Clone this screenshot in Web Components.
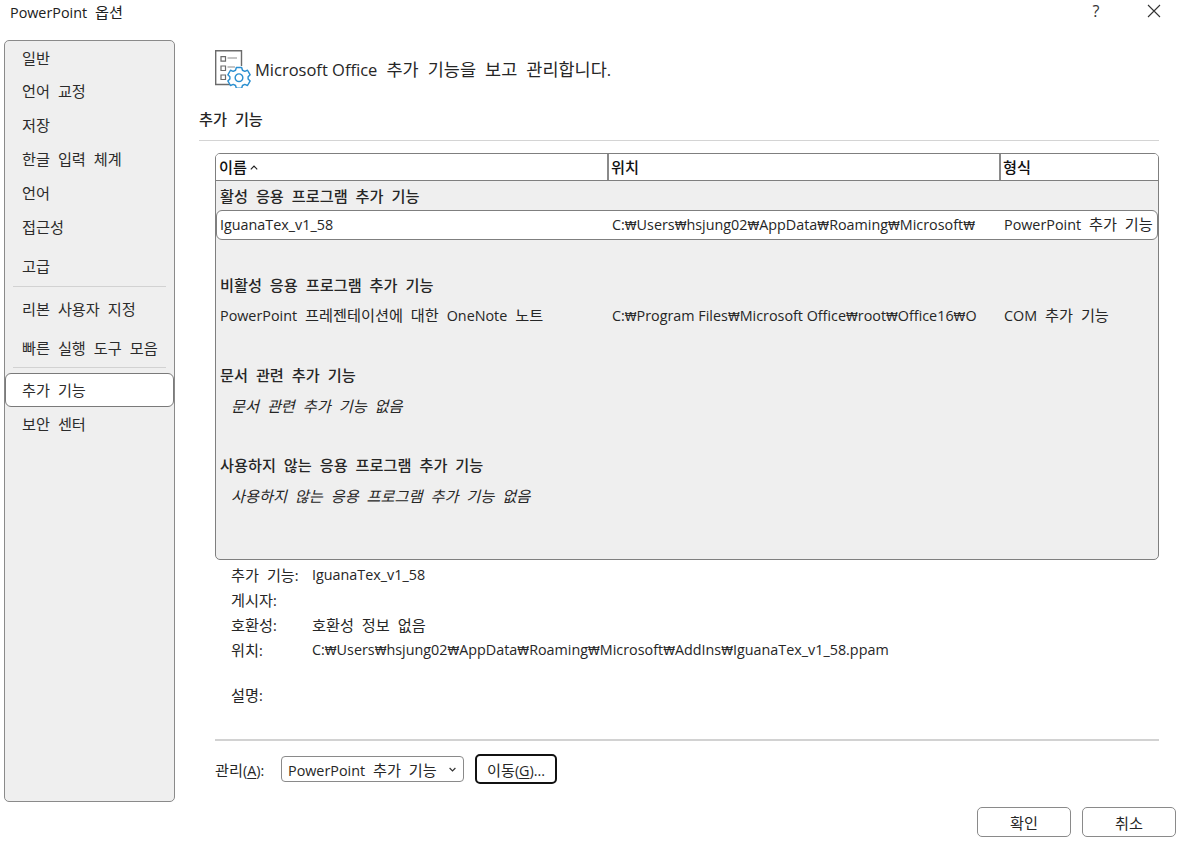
<!DOCTYPE html>
<html lang="ko"><head><meta charset="utf-8"><title>PowerPoint 옵션</title>
<style>
html,body{margin:0;padding:0;background:#fff}
body{width:1180px;height:846px;overflow:hidden;font:14.35px "Open Sans","Noto Sans CJK KR",sans-serif;color:#262626}
</style></head><body>
<ppt-dialog>
  <ppt-titlebar slot="title">PowerPoint 옵션</ppt-titlebar>
  <ppt-sidebar slot="side">
    <ppt-nav h="33">일반</ppt-nav>
    <ppt-nav h="34">언어 교정</ppt-nav>
    <ppt-nav h="34">저장</ppt-nav>
    <ppt-nav h="34">한글 입력 체계</ppt-nav>
    <ppt-nav h="34">언어</ppt-nav>
    <ppt-nav h="34">접근성</ppt-nav>
    <ppt-nav h="42" lift="0">고급</ppt-nav>
    <ppt-sep></ppt-sep>
    <ppt-nav h="44">리본 사용자 지정</ppt-nav>
    <ppt-nav h="36" lift="4">빠른 실행 도구 모음</ppt-nav>
    <ppt-sep></ppt-sep>
    <ppt-nav h="34" selected>추가 기능</ppt-nav>
    <ppt-nav h="34">보안 센터</ppt-nav>
  </ppt-sidebar>
  <ppt-main slot="main">
    <ppt-heading>Microsoft Office 추가 기능을 보고 관리합니다.</ppt-heading>
    <ppt-section>추가 기능</ppt-section>
    <ppt-table>
      <ppt-row kind="group" a="활성 응용 프로그램 추가 기능"></ppt-row>
      <ppt-row kind="sel" a="IguanaTex_v1_58" b="C:₩Users₩hsjung02₩AppData₩Roaming₩Microsoft₩" c="PowerPoint 추가 기능"></ppt-row>
      <ppt-row></ppt-row>
      <ppt-row kind="group" a="비활성 응용 프로그램 추가 기능"></ppt-row>
      <ppt-row a="PowerPoint 프레젠테이션에 대한 OneNote 노트" b="C:₩Program Files₩Microsoft Office₩root₩Office16₩O" c="COM 추가 기능"></ppt-row>
      <ppt-row></ppt-row>
      <ppt-row kind="group" a="문서 관련 추가 기능"></ppt-row>
      <ppt-row kind="empty" a="문서 관련 추가 기능 없음"></ppt-row>
      <ppt-row></ppt-row>
      <ppt-row kind="group" a="사용하지 않는 응용 프로그램 추가 기능"></ppt-row>
      <ppt-row kind="empty" a="사용하지 않는 응용 프로그램 추가 기능 없음"></ppt-row>
    </ppt-table>
    <ppt-details>
      <ppt-detail label="추가 기능:" h="25">IguanaTex_v1_58</ppt-detail>
      <ppt-detail label="게시자:" h="25"></ppt-detail>
      <ppt-detail label="호환성:" h="25">호환성 정보 없음</ppt-detail>
      <ppt-detail label="위치:" h="45">C:₩Users₩hsjung02₩AppData₩Roaming₩Microsoft₩AddIns₩IguanaTex_v1_58.ppam</ppt-detail>
      <ppt-detail label="설명:" h="25"></ppt-detail>
    </ppt-details>
    <ppt-manage></ppt-manage>
  </ppt-main>
  <ppt-button slot="ok">확인</ppt-button>
  <ppt-button slot="cancel">취소</ppt-button>
</ppt-dialog>
<script>
function def(name,html){
  customElements.define(name,class extends HTMLElement{
    connectedCallback(){
      if(this.shadowRoot)return;
      const r=this.attachShadow({mode:'open'});
      r.innerHTML=typeof html==='function'?html(this):html;
      fit(r);
    }
  });
}
/* Hangul runs are set slightly larger than Latin, with wider spaces; the won sign gets its own advance */
const RUN=/(\s*[\uAC00-\uD7A3]+(?:\s+[\uAC00-\uD7A3]+)*\s*|₩)/;
function fit(root){
  for(const n of [...root.childNodes]){
    if(n.nodeType===1){
      if(n.localName!=='style'&&n.localName!=='svg')fit(n);
    }else if(n.nodeType===3&&RUN.test(n.data)&&n.data.trim()){
      const f=document.createDocumentFragment();
      n.data.split(RUN).forEach((p,i)=>{
        if(!p)return;
        if(i%2){
          const s=document.createElement('span');
          s.textContent=p;
          s.style.cssText=p==='₩'?'font-family:"DejaVu Sans",sans-serif;font-size:.83em':'font-family:"Noto Sans CJK KR",sans-serif;font-size:1.06em;word-spacing:.24em';
          f.append(s);
        }else f.append(p);
      });
      n.replaceWith(f);
    }
  }
}
def('ppt-dialog',`<style>
:host{display:grid;width:1180px;height:846px;grid-template-columns:171px 1fr;grid-template-rows:40px 762px 1fr;column-gap:40px;padding-left:4px;box-sizing:border-box}
.t{grid-column:1/3;margin-left:-4px}
.f{grid-column:1/3;display:flex;justify-content:flex-end;gap:11px;padding:5px 4px 0 0}
</style>
<div class="t"><slot name="title"></slot></div>
<slot name="side"></slot><slot name="main"></slot>
<div class="f"><slot name="ok"></slot><slot name="cancel"></slot></div>`);
def('ppt-titlebar',`<style>
:host{display:flex;align-items:flex-start;height:40px;color:#202020}
.t{flex:1;padding:1px 0 0 10px;line-height:20px}
.q{width:16px;text-align:center;font-size:16px;line-height:22px;margin-right:43px;color:#333}
svg{display:block;margin:4px 19px 0 0}
</style><div class="t"><slot></slot></div><div class="q">?</div>
<svg width="14" height="14" viewBox="0 0 14 14" fill="none" stroke="#333" stroke-width="1.1"><path d="M1 1L13 13M13 1L1 13"/></svg>`);
def('ppt-sidebar',`<style>
:host{display:block;box-sizing:border-box;width:171px;height:762px;background:#efefef;border:1px solid #8a8a8a;border-radius:5px}
</style><slot></slot>`);
def('ppt-nav',h=>`<style>
:host{display:flex;align-items:center;box-sizing:border-box;height:${h.getAttribute('h')}px;padding:0 0 ${h.getAttribute('lift')||2}px 17px;white-space:nowrap;color:#2b2b2b}
:host([selected]){background:#fff;border:1px solid #7a7a7a;border-radius:6px;margin-top:5px;padding-left:16px;width:169px}
</style><slot></slot>`);
def('ppt-sep',`<style>:host{display:block;height:1px;background:#d2d2d2;margin:0 8px}</style>`);
def('ppt-main',`<style>:host{display:block;width:944px}</style><slot></slot>`);
def('ppt-heading',`<style>
:host{display:flex;align-items:center;box-sizing:border-box;height:60px;font-size:16.5px;color:#262626;padding-bottom:3px}
svg{display:block;margin:0 4px 0 0;flex:none;align-self:flex-start;margin-top:10px}
</style><svg width="36" height="38" viewBox="0 0 36 38" fill="none">
<path d="M16 34.500H.7V.7H26.500V16" stroke="#6b6b6b" stroke-width="1.4"/>
<path d="M6 6.700h4.500v4.500H6zM6 16h4.500v4.500H6zM6 25h4.500v4.500H6z" stroke="#6b6b6b" stroke-width="1.2"/>
<path d="M12.500 8h9.500M12.500 17h7.500" stroke="#8a8a8a" stroke-width="1.2"/>
<g transform="translate(24 27.700) scale(1.2)" stroke="#2b8fd0" stroke-width="1.2"><path d="M-2.200-8.500h4.400l.7 2.300 1.900.9 2.300-.9 2.200 3.800-1.700 1.700v1.700l1.700 1.700-2.200 3.800-2.300-.9-1.900.9-.7 2.300h-4.400l-.7-2.300-1.900-.9-2.300.9-2.200-3.800 1.700-1.700v-1.700l-1.700-1.700 2.200-3.800 2.300.9 1.900-.9z" fill="#fff" stroke-linejoin="round"/><circle r="3.200"/></g></svg>
<span><slot></slot></span>`);
def('ppt-section',`<style>
:host{display:flex;align-items:center;box-sizing:border-box;height:41px;margin-left:-16px;width:960px;font-weight:500;border-bottom:1px solid #d4d4d4;padding-bottom:5px}
</style><slot></slot>`);
def('ppt-table',`<style>
:host{display:block;box-sizing:border-box;width:944px;height:407px;margin-top:12px;background:#efefef;border:1px solid #7f7f7f;border-radius:5px;overflow:hidden}
.h{display:grid;grid-template-columns:393px 392px 1fr;height:26px;background:#fff;border-bottom:1px solid #7f7f7f;font-weight:500;color:#111}
.h div{padding-left:2px;line-height:25px;border-right:2px solid #8a8a8a;box-sizing:border-box}
.h div:first-child{padding-left:3px}
.h div:last-child{border:0}
svg{margin-left:3px;vertical-align:3px}
</style><div class="h"><div>이름<svg width="8" height="5" viewBox="0 0 8 5" fill="none" stroke="#222" stroke-width="1.2"><path d="M.8 4.300L4 1l3.200 3.300"/></svg></div><div>위치</div><div>형식</div></div><slot></slot>`);
def('ppt-row',e=>{
  const k=e.getAttribute('kind')||'';
  const a=e.getAttribute('a')||'',b=e.getAttribute('b')||'',c=e.getAttribute('c')||'';
  return `<style>
:host{display:block;height:30px}
.r{display:grid;grid-template-columns:392px 392px 1fr;align-items:baseline;align-content:center;height:30px;box-sizing:border-box;white-space:nowrap;overflow:hidden;padding-top:1px}
.r>div{padding-left:4px;overflow:hidden;line-height:22px}
.group{font-weight:500;padding:0 0 1px}.group>div{overflow:visible}
.empty{font-style:italic;padding:2px 0 0 11px}.empty>div{overflow:visible}
.sel{background:#fff;border:1px solid #7f7f7f;border-radius:6px;grid-template-columns:391px 392px 1fr;padding:0 0 1px;margin-top:-1px}
.sel>div:first-child{padding-left:3px}
</style><div class="r ${k}"><div>${a}</div><div>${b}</div><div>${c}</div></div>`;
});
def('ppt-details',`<style>:host{display:block;height:179px;padding:2px 0 0 16px;box-sizing:border-box}</style><slot></slot>`);
def('ppt-detail',e=>`<style>
:host{display:grid;grid-template-columns:81px 1fr;height:${e.getAttribute('h')}px;line-height:25px;white-space:nowrap}
</style><div>${e.getAttribute('label')}</div><div><slot></slot></div>`);
def('ppt-manage',`<style>
:host{display:flex;align-items:center;box-sizing:border-box;height:47px;border-top:2px solid #d2d2d2;padding-top:11px;white-space:nowrap}
u{text-underline-offset:2px}
.l{width:66px}
.s{box-sizing:border-box;width:183px;height:26px;border:1px solid #8a8a8a;border-radius:4px;display:flex;align-items:center;padding:0 7px 0 6px;justify-content:space-between}
.b{box-sizing:border-box;margin-left:11px;width:82px;height:30px;border:2px solid #111;border-radius:5px;display:flex;align-items:center;justify-content:center}
</style><div class="l">관리(<u>A</u>):</div>
<div class="s"><span>PowerPoint 추가 기능</span><svg width="7" height="5" viewBox="0 0 7 5" fill="none" stroke="#333" stroke-width="1.2"><path d="M.6 1l2.900 2.900L6.400 1"/></svg></div>
<div class="b"><span>이동(<u>G</u>)...</span></div>`);
def('ppt-button',`<style>
:host{display:flex;align-items:center;justify-content:center;box-sizing:border-box;width:94px;height:30px;border:1px solid #8a8a8a;border-radius:5px}
</style><slot></slot>`);
fit(document.body);
</script>
</body></html>
